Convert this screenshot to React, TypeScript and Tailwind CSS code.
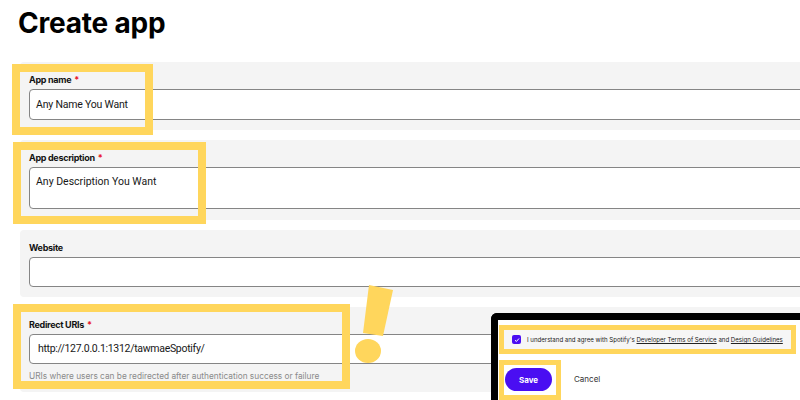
import React from "react";

function Label({ text, required }: { text: string; required?: boolean }) {
  return (
    <div className="h-[14px] leading-[14px] text-[9px] font-bold text-[#121212] tracking-[-0.3px] font-['Inter',sans-serif]">
      {text}
      {required && <span className="ml-[3px] text-[#e91429]">*</span>}
    </div>
  );
}

function Panel({ children, pb = "pb-[10px]" }: { children: React.ReactNode; pb?: string }) {
  return <div className={`rounded-[4px] bg-[#f4f4f4] pl-[9px] pt-[11px] ${pb}`}>{children}</div>;
}

export default function App() {
  return (
    <div className="relative h-[400px] w-[800px] overflow-hidden bg-white font-['Inter',sans-serif]">
      <h1 className="ml-[18px] pt-[5px] text-[28px] font-bold leading-[36px] tracking-[-0.2px] text-black">
        Create app
      </h1>

      <div className="ml-[20px] mt-[21px] flex w-[900px] flex-col gap-[10px]">
        <Panel>
          <Label text="App name" required />
          <div className="mt-[2px] flex h-[31px] items-center rounded-[4px] border border-[#858585] bg-white pl-[6px] font-['Roboto',sans-serif] text-[10.5px] tracking-[-0.2px] text-[#181818]">
            Any Name You Want
          </div>
        </Panel>
        <Panel pb="pb-[11px]">
          <Label text="App description" required />
          <div className="mt-[2px] h-[42px] rounded-[4px] border border-[#858585] bg-white pl-[6px] pt-[6px] font-['Roboto',sans-serif] text-[10.5px] leading-[16px] text-[#181818]">
            Any Description You Want
          </div>
        </Panel>
        <Panel>
          <Label text="Website" />
          <div className="mt-[2px] h-[30px] rounded-[4px] border border-[#858585] bg-white" />
        </Panel>
        <Panel>
          <Label text="Redirect URIs" required />
          <div className="mt-[2px] flex h-[30px] items-center rounded-[4px] border border-[#858585] bg-white pl-[8px] font-['Roboto',sans-serif] text-[10.5px] tracking-[-0.3px] text-[#181818]">
            http://127.0.0.1:1312/tawmaeSpotify/
          </div>
          <div className="mt-[6px] h-[12px] leading-[12px] text-[8.3px] text-[#8a8a8a]">
            URIs where users can be redirected after authentication success or failure
          </div>
        </Panel>
      </div>

      {/* highlight annotations */}
      <div className="absolute left-[12px] top-[64px] h-[71px] w-[141px] border-[8px] border-[#ffd65c]" />
      <div className="absolute left-[13px] top-[142px] h-[82px] w-[193px] border-[8px] border-[#ffd65c]" />
      <div className="absolute left-[13px] top-[304px] h-[85px] w-[337px] border-[8px] border-[#ffd65c]" />

      {/* exclamation mark */}
      <svg className="absolute left-[350px] top-[280px]" width="50" height="90" viewBox="350 280 50 90">
        <polygon points="369,285 393,290 383,336 363,333" fill="#ffd65c" />
        <ellipse cx="368" cy="351" rx="13" ry="12" fill="#ffd65c" />
      </svg>

      {/* pasted dialog screenshot */}
      <div className="absolute left-[491px] top-[313px] h-[100px] w-[320px] rounded-tl-[6px] border-l-[7px] border-t-[7px] border-black bg-white">
        <div className="ml-[1px] mt-[5px] flex flex-col gap-[6px]">
          <div className="flex h-[29px] w-[297px] items-center border-[5px] border-[#ffd65c] bg-[#f6f6f6] pl-[8px]">
            <div className="flex h-[9px] w-[9px] shrink-0 items-center justify-center rounded-[2px] bg-[#4a0ef2]">
              <svg width="6" height="6" viewBox="0 0 6 6">
                <path d="M1 3.2 L2.4 4.5 L5 1.5" stroke="white" strokeWidth="1" fill="none" />
              </svg>
            </div>
            <span className="ml-[6px] whitespace-nowrap text-[6.1px] text-[#222]">
              I understand and agree with Spotify's{" "}
              <span className="underline">Developer Terms of Service</span> and{" "}
              <span className="underline">Design Guidelines</span>
            </span>
          </div>
          <div className="flex items-start">
            <div className="h-[40px] w-[62px] border-[5px] border-[#ffd65c] pl-[1px] pt-[3px]">
              <div className="flex h-[23px] w-[47px] items-center justify-center rounded-full bg-[#4a0ef2] text-[8px] font-bold text-white">
                Save
              </div>
            </div>
            <div className="ml-[13px] mt-[13px] text-[8px] text-[#333]">Cancel</div>
          </div>
        </div>
      </div>
    </div>
  );
}
